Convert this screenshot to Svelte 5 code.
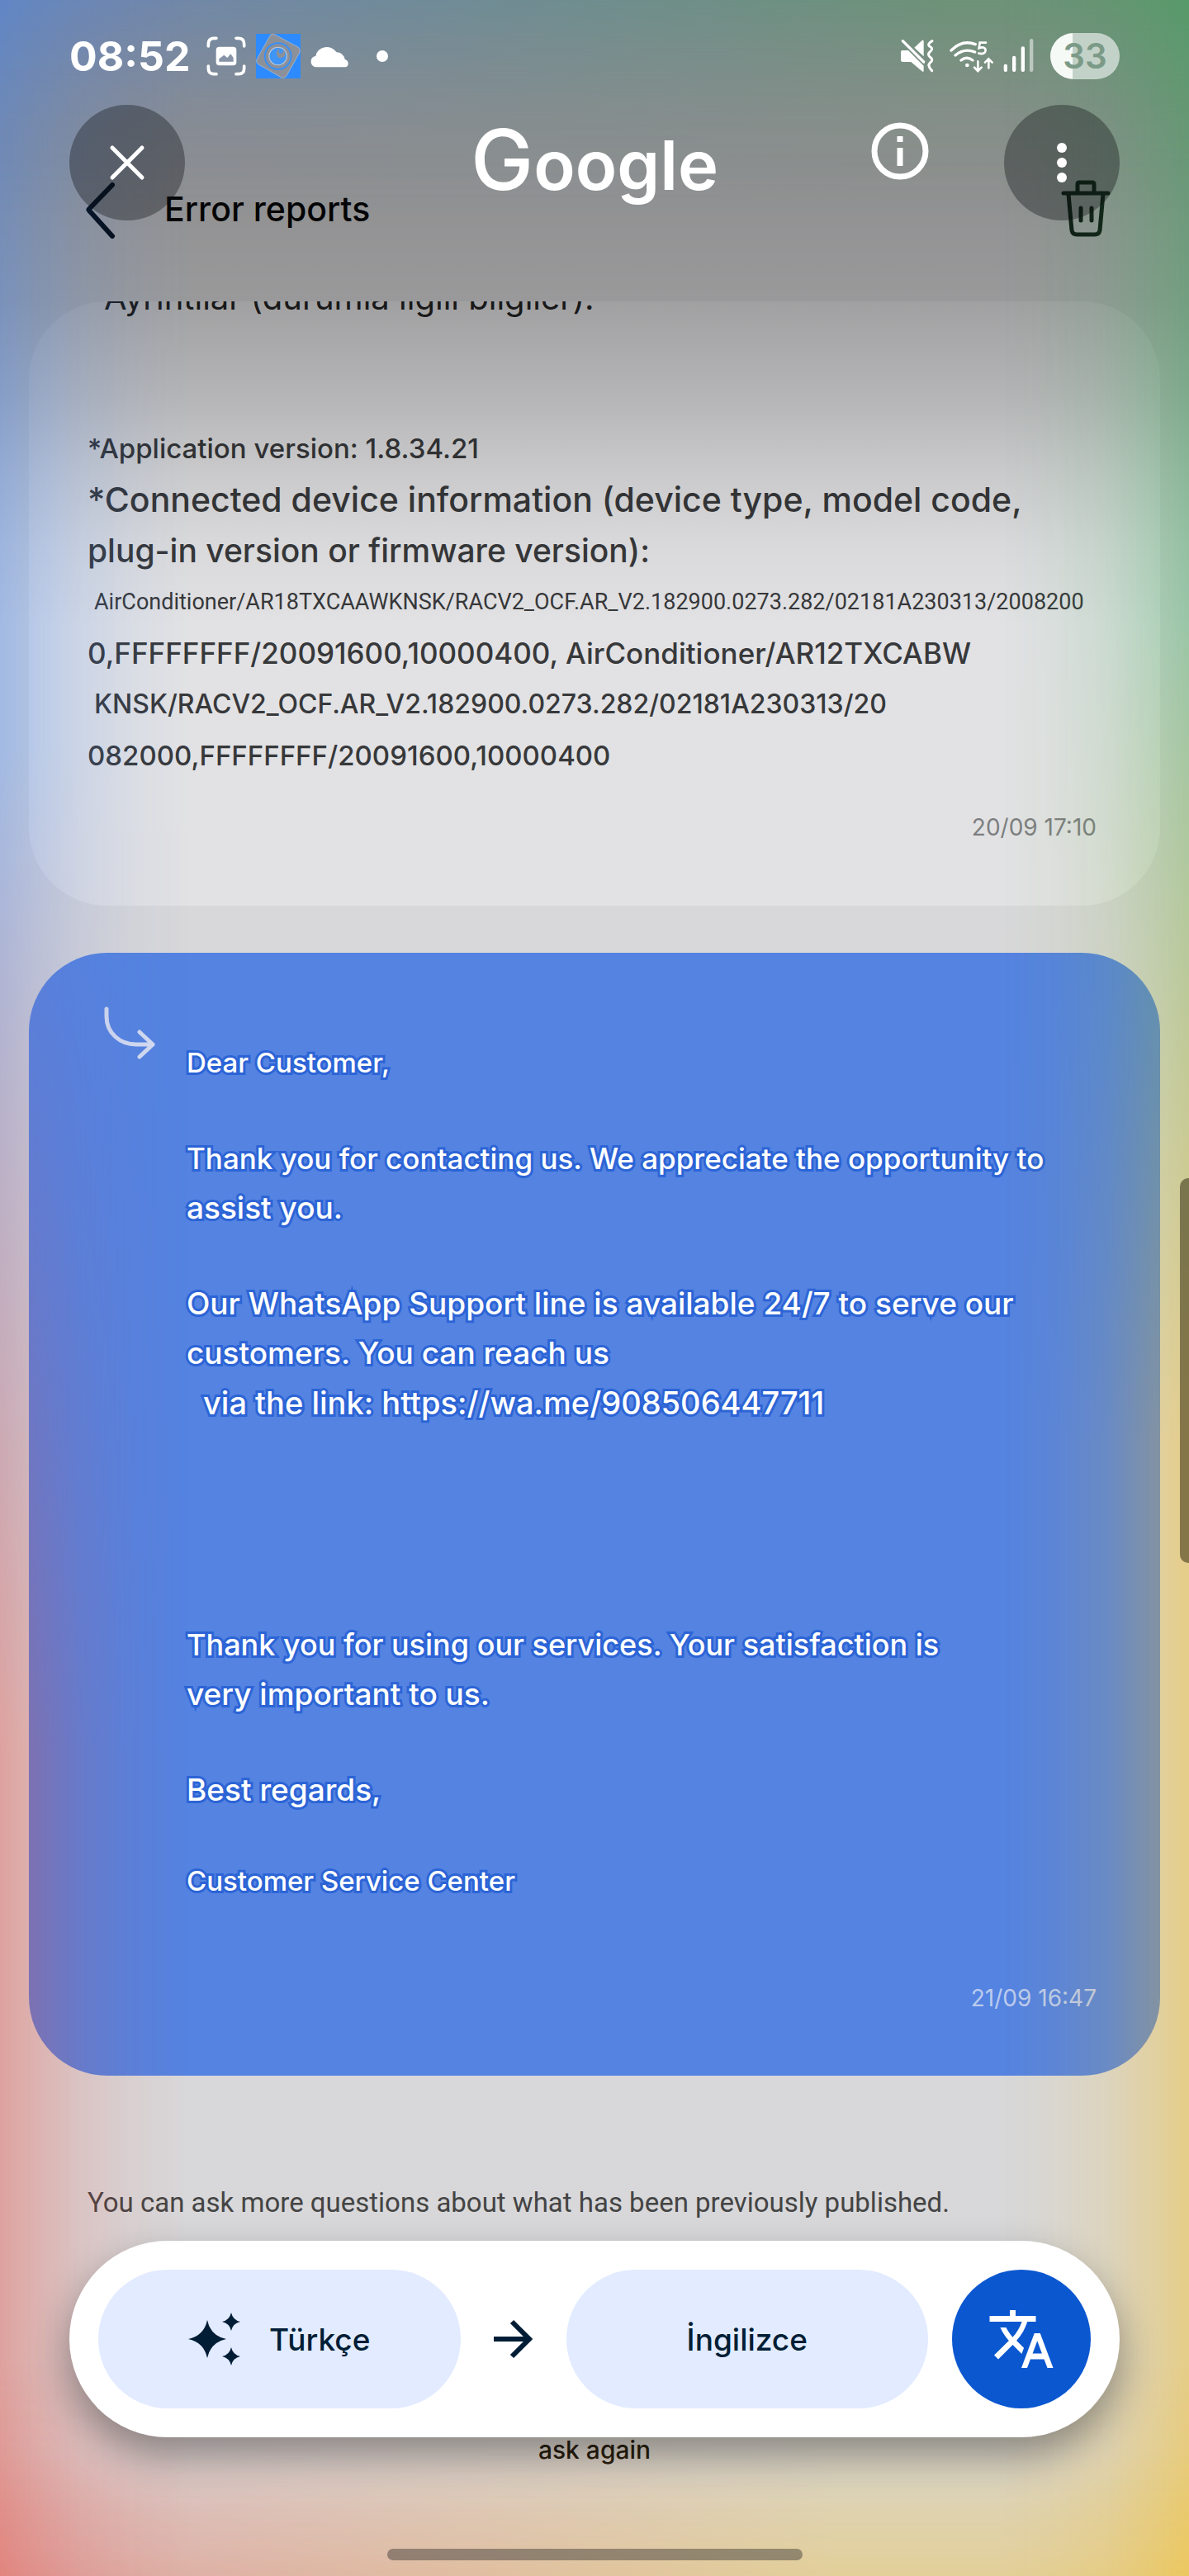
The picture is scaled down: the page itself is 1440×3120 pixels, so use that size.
<script>
  const report = [
    { text: '*Application version: 1.8.34.21', cls: 's33' },
    { text: '*Connected device information (device type, model code,', cls: 's41' },
    { text: 'plug-in version or firmware version):', cls: 's39' },
    { text: 'AirConditioner/AR18TXCAAWKNSK/RACV2_OCF.AR_V2.182900.0273.282/02181A230313/2008200', cls: 'narrow s27 indent' },
    { text: '0,FFFFFFFF/20091600,10000400, AirConditioner/AR12TXCABW', cls: 's35' },
    { text: 'KNSK/RACV2_OCF.AR_V2.182900.0273.282/02181A230313/20', cls: 's32 indent' },
    { text: '082000,FFFFFFFF/20091600,10000400', cls: 's33' },
  ];
</script>

<div class="screen">
  <main class="app">
    <header class="app-head">
      <button class="plain" aria-label="Back">
        <svg width="52" height="72" viewBox="0 0 52 72" fill="none" stroke="#020a14" stroke-width="6" stroke-linecap="round" stroke-linejoin="round"><path d="M41 7 L13 36 Q12 37 13 38 L41 69" /></svg>
      </button>
      <h1>Error reports</h1>
      <button class="plain" aria-label="Delete">
        <svg width="60" height="70" viewBox="0 0 60 70" fill="none" stroke="#14211b" stroke-width="5" stroke-linecap="round" stroke-linejoin="round">
          <path d="M3 16H57M20 15V5Q20 3 22 3H38Q40 3 40 5V15M9 17L13 61Q14 66 19 66H41Q46 66 47 61L51 17M24 34V49M37 34V49" />
        </svg>
      </button>
    </header>

    <article class="card question">
      <p class="clipped">Ayrıntılar (durumla ilgili bilgiler):</p>
      <div class="lines">
        {#each report as line}
          <p class={line.cls}>{line.text}</p>
        {/each}
      </div>
      <time>20/09 17:10</time>
    </article>

    <article class="card answer">
      <div class="reply">
        <svg width="64" height="66" viewBox="0 0 64 66" fill="none" stroke="#d3dcf2" stroke-width="5" stroke-linecap="round" stroke-linejoin="round"><path d="M4 3V12C4 32 20 46 40 46H60M44 31L60 46L44 61" /></svg>
        <div class="letter">
          <p class="s33">Dear Customer,</p>
          <p><span class="s35">Thank you for contacting us. We appreciate the opportunity to</span><span class="s37">assist you.</span></p>
          <p class="s37"><span>Our WhatsApp Support line is available 24/7 to serve our</span><span>customers. You can reach us</span><span class="s38 link-line">via the link: <a href="https://wa.me/908506447711">https://wa.me/908506447711</a></span></p>
          <p class="closing"><span class="s36">Thank you for using our services. Your satisfaction is</span><span class="s37">very important to us.</span></p>
          <div class="signature">
            <p class="s37">Best regards,</p>
            <p class="s33">Customer Service Center</p>
          </div>
        </div>
      </div>
      <time>21/09 16:47</time>
    </article>

    <p class="hint">You can ask more questions about what has been previously published.</p>
    <button class="plain ask">ask again</button>
  </main>

  <div class="scrim"></div>
  <div class="glow left"></div>
  <div class="glow right"></div>
  <div class="glow top"></div>
  <div class="glow bottom"></div>
  <div class="edge-handle"></div>

  <div class="top-layer">
    <div class="status">
      <div class="status-left">
        <span class="clock">08:52</span>
        <svg width="48" height="48" viewBox="0 0 144 144" fill="none" stroke="#fff" stroke-width="11" stroke-linecap="round">
          <path d="M7 36V28Q7 7 28 7H36M108 7H116Q137 7 137 28V36M137 108V116Q137 137 116 137H108M36 137H28Q7 137 7 116V108" />
          <rect x="35" y="38" width="74" height="68" rx="12" fill="#fff" stroke="none" />
          <path d="M46 92V82L64 68L76 78L88 64L98 78V92Z" fill="#8793a6" stroke="none" />
        </svg>
        <svg class="app-icon" width="54" height="54" viewBox="0 0 160 160">
          <rect width="160" height="160" fill="#2d8bff" />
          <path d="M52 4Q60 -2 70 4L152 48Q162 56 156 68L110 150Q102 162 90 156L10 110Q-2 102 4 90Z" fill="#8b9099" stroke="#b9c3cf" stroke-width="2" />
          <circle cx="79" cy="80" r="47" fill="#8b9099" stroke="#3a90f5" stroke-width="6" />
          <circle cx="79" cy="80" r="32" fill="#3f95f6" stroke="#c3cad3" stroke-width="3" />
          <path d="M84 49Q76 68 88 70Q98 70 98 56Q112 74 98 84Q78 92 74 74Q72 60 84 49Z" fill="#8b9099" />
        </svg>
        <svg width="50" height="28" viewBox="0 0 150 84" fill="#fff"><path d="M22 82A22 21 0 0 1 22 41A41 38 0 0 1 98 28A30 30 0 0 1 128 54A15 15 0 0 1 132 82Z" /></svg>
        <span class="dot"></span>
      </div>
      <div class="status-right">
        <svg width="42" height="42" viewBox="0 0 126 126" fill="#fff">
          <path d="M3 48Q3 42 9 42H30L86 98V116Q86 122 80 118L40 84H10Q3 84 3 76Z" />
          <path d="M52 32L80 6Q86 2 86 10V64Z" />
          <path d="M10 8L86 84" stroke="#fff" stroke-width="10" stroke-linecap="round" />
          <path d="M117 8Q98 18 107 27Q124 36 109 47Q98 57 109 66Q124 76 109 87Q98 98 116 116" fill="none" stroke="#fff" stroke-width="9" stroke-linecap="round" />
        </svg>
        <svg class="wifi" width="54" height="42" viewBox="0 0 162 126" fill="none" stroke="#fff" stroke-width="10" stroke-linecap="round">
          <path d="M6 42Q46 2 94 20M21 60Q54 32 92 48M42 78Q62 62 84 78" />
          <circle cx="64" cy="96" r="7" fill="#fff" stroke="none" />
          <path d="M103 82V116M90 104L103 117L116 104M142 106V74M129 86L142 73L155 86" stroke-width="8" />
          <path d="M132 14H110L107 34Q130 26 131 42Q130 58 106 53" stroke-width="8" />
        </svg>
        <svg width="38" height="42" viewBox="0 0 114 126" fill="#fff">
          <rect x="2" y="92" width="13" height="28" rx="6" /><rect x="33" y="62" width="13" height="58" rx="6" /><rect x="65" y="28" width="13" height="92" rx="6" /><rect x="96" y="0" width="13" height="120" rx="6" opacity=".5" />
        </svg>
        <span class="battery">33</span>
      </div>
    </div>

    <header class="lens-head">
      <button class="round" aria-label="Close">
        <svg width="44" height="44" viewBox="0 0 44 44" stroke="#fff" stroke-width="5" stroke-linecap="round"><path d="M4 4L40 40M40 4L4 40" /></svg>
      </button>
      <span class="logo"><span class="big">G</span>oogle</span>
      <div class="actions">
        <button class="plain info" aria-label="Information">
          <svg width="70" height="70" viewBox="0 0 70 70" fill="none" stroke="#fff" stroke-width="7"><circle cx="35" cy="35" r="31" /><path d="M35 31V53M35 17V24" /></svg>
        </button>
        <button class="round" aria-label="More options">
          <svg width="12" height="48" viewBox="0 0 12 48" fill="#fff"><circle cx="6" cy="6" r="6" /><circle cx="6" cy="24" r="6" /><circle cx="6" cy="42" r="6" /></svg>
        </button>
      </div>
    </header>
  </div>

  <div class="bottom-layer">
    <div class="translate">
      <button class="lang">
        <svg width="64" height="64" viewBox="0 0 64 64" fill="#001d35">
          <path d="M23 9Q27 28 46 32Q27 36 23 55Q19 36 0 32Q19 28 23 9Z" />
          <path d="M52 0Q54 9 63 11Q54 13 52 22Q50 13 41 11Q50 9 52 0Z" />
          <path d="M52 42Q54 51 63 53Q54 55 52 64Q50 55 41 53Q50 51 52 42Z" />
        </svg>
        Türkçe
      </button>
      <svg class="to" width="48" height="48" viewBox="0 0 48 48" fill="none" stroke="#001d35" stroke-width="6"><path d="M0 24H43M22 3L43 24L22 45" /></svg>
      <button class="lang">İngilizce</button>
      <button class="go" aria-label="Translate">
        <svg width="84" height="84" viewBox="0 0 24 24" fill="#fff"><path d="M12.87 15.07l-2.54-2.51.03-.03c1.74-1.94 2.98-4.17 3.71-6.53H17V4h-7V2H8v2H1v1.99h11.17C11.5 7.92 10.44 9.75 9 11.35 8.07 10.32 7.3 9.19 6.69 8h-2c.73 1.63 1.73 3.17 2.98 4.56l-5.09 5.02L4 19l5-5 3.11 3.11.76-2.04zM18.5 10h-2L12 22h2l1.12-3h4.75L21 22h2l-4.5-12zm-2.62 7l1.62-4.33L19.12 17h-3.24z" /></svg>
      </button>
    </div>
    <div class="home"></div>
  </div>
</div>

<style>
  :global(body) { margin: 0; }
  .screen {
    position: relative;
    min-height: 100vh;
    overflow: hidden;
    background: #d8d8da;
    font-family: Inter, "Noto Sans", sans-serif;
    color: #37383a;
  }
  p, h1 { margin: 0; font-weight: inherit; }
  button { font-family: inherit; border: 0; cursor: pointer; }
  svg { display: block; flex: none; }
  .plain { background: none; padding: 0; }

  .s27 { font-size: 27px; }
  .s32 { font-size: 32px; }
  .s33 { font-size: 33px; }
  .s35 { font-size: 35px; }
  .s36 { font-size: 36px; }
  .s37 { font-size: 37px; }
  .s38 { font-size: 38px; }
  .s39 { font-size: 39px; }
  .s41 { font-size: 41px; }

  .app { display: flex; flex-direction: column; padding: 0 35px 120px; }
  .app-head {
    display: flex;
    align-items: center;
    height: 80px;
    padding: 213px 60px 72px;
  }
  .app-head h1 {
    flex: 1;
    padding-left: 52px;
    font-size: 41px;
    font-weight: 500;
    color: #060606;
  }

  .card { border-radius: 95px; white-space: nowrap; }
  .card time {
    display: block;
    padding-right: 77px;
    font-size: 28px;
    line-height: 40px;
    text-align: right;
  }
  .question {
    overflow: hidden;
    padding-bottom: 75px;
    background: #e2e2e4;
  }
  .question time { margin-top: 36px; color: #7d7e80; }
  .clipped {
    margin: -29px 0 126px;
    padding-left: 91px;
    font-size: 40px;
    line-height: 50px;
    color: #222;
  }
  .lines { padding-left: 71px; line-height: 62px; font-weight: 500; }
  .indent { padding-left: 8px; }
  .narrow, .hint { font-family: Roboto, "Noto Sans", sans-serif; font-weight: 400; }

  .answer {
    margin-top: 57px;
    padding: 65px 0 74px;
    background: #5483e1;
  }
  .reply { display: flex; gap: 37px; padding-left: 90px; }
  .letter {
    display: flex;
    flex-direction: column;
    gap: 56px;
    padding-top: 38px;
    line-height: 60px;
    font-weight: 500;
    color: #fff;
    -webkit-text-stroke: 6px #2c64d6;
    paint-order: stroke fill;
  }
  .letter span { display: block; }
  .letter a { color: inherit; text-decoration: none; }
  .link-line { padding-left: 20px; }
  .closing { margin-top: 177px; }
  .signature { display: grid; gap: 50px; }
  .answer time { margin-top: 92px; color: #bccbee; }

  .hint {
    margin-top: 124px;
    padding-left: 71px;
    font-size: 33px;
    line-height: 60px;
    white-space: nowrap;
    color: #444;
  }
  .ask {
    align-self: center;
    margin-top: 249px;
    font-size: 30px;
    font-weight: 500;
    line-height: 40px;
    color: #16140f;
  }

  .scrim, .glow, .edge-handle, .top-layer, .bottom-layer { position: absolute; }
  .scrim, .glow { pointer-events: none; }
  .scrim {
    inset: 0 0 auto;
    height: 760px;
    background: linear-gradient(rgba(0,0,0,.37), rgba(0,0,0,.34) 200px, rgba(0,0,0,.29) 365px, rgba(0,0,0,.2) 480px, rgba(0,0,0,.11) 570px, rgba(0,0,0,.04) 660px, transparent);
  }
  .left, .right { top: 0; bottom: 0; width: 230px; }
  .left {
    left: 0;
    background: linear-gradient(#4285f4 29%, #ea4335 68%);
    mask-image: linear-gradient(to right, rgba(0,0,0,.36), rgba(0,0,0,.26) 40px, rgba(0,0,0,.13) 100px, rgba(0,0,0,.05) 160px, transparent);
  }
  .right {
    right: 0;
    background: linear-gradient(#34a853 24%, #fbbc04 56%);
    mask-image: linear-gradient(to left, rgba(0,0,0,.38), rgba(0,0,0,.27) 40px, rgba(0,0,0,.13) 100px, rgba(0,0,0,.05) 160px, transparent);
  }
  .top, .bottom { left: 0; right: 0; height: 260px; }
  .top {
    top: 0;
    background: linear-gradient(to right, #4285f4 10%, #34a853 80%);
    mask-image: linear-gradient(rgba(0,0,0,.32), rgba(0,0,0,.2) 70px, rgba(0,0,0,.08) 150px, transparent);
  }
  .bottom {
    bottom: 0;
    background: linear-gradient(to right, #ea4335 5%, #fbbc04 70%);
    mask-image: linear-gradient(to top, rgba(0,0,0,.3), rgba(0,0,0,.2) 80px, rgba(0,0,0,.08) 150px, transparent);
  }
  .edge-handle {
    top: 1427px;
    right: 0;
    width: 11px;
    height: 466px;
    border-radius: 10px 0 0 10px;
    background: rgba(30, 22, 0, .48);
  }

  .top-layer { inset: 40px 84px auto; }
  .status, .status-left, .status-right { display: flex; align-items: center; }
  .status { justify-content: space-between; height: 56px; color: #fff; }
  .clock { font-size: 50px; font-weight: 700; margin-right: 20px; }
  .app-icon { margin: 0 11px 0 12px; }
  .dot { width: 14px; height: 14px; margin-left: 31px; border-radius: 50%; background: #fff; }
  .wifi { margin: 0 11px 0 18px; }
  .battery {
    width: 84px;
    margin-left: 19px;
    border-radius: 28px;
    background: linear-gradient(to right, #f6faf7 27px, #c3d2c8 27px);
    font-size: 42px;
    font-weight: 600;
    line-height: 56px;
    text-align: center;
    color: #7b9a87;
  }

  .lens-head {
    display: grid;
    grid-template-columns: 1fr auto 1fr;
    margin-top: 31px;
  }
  .round {
    display: grid;
    place-items: center;
    width: 140px;
    height: 140px;
    padding: 0;
    border-radius: 50%;
    background: rgba(10, 12, 14, .35);
  }
  .logo {
    font-size: 83px;
    font-weight: 600;
    line-height: 132px;
    color: #fff;
  }
  .big { font-size: 102px; font-weight: 500; }
  .actions { display: flex; justify-content: flex-end; align-items: flex-start; gap: 91px; }
  .info { padding-top: 21px; }

  .bottom-layer { inset: auto 84px 19px; display: grid; gap: 135px; justify-items: center; }
  .translate {
    display: flex;
    align-items: center;
    justify-self: stretch;
    padding: 35px;
    border-radius: 119px;
    background: #fff;
    box-shadow: 0 22px 48px rgba(0, 0, 0, .36);
  }
  .lang {
    display: flex;
    flex: 1;
    align-items: center;
    justify-content: center;
    gap: 34px;
    height: 168px;
    border-radius: 84px;
    background: #e2ebff;
    font-size: 37px;
    font-weight: 500;
    color: #001d35;
  }
  .to { margin: 0 40px; }
  .go {
    display: grid;
    place-items: center;
    width: 168px;
    height: 168px;
    margin-left: 29px;
    padding: 0;
    border-radius: 50%;
    background: #0b57d0;
  }
  .home { width: 503px; height: 14px; border-radius: 7px; background: rgba(40, 40, 40, .42); }
</style>
